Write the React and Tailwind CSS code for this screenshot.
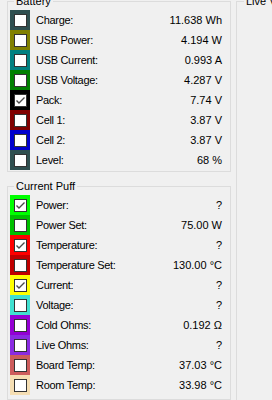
const battery = [
  { label: 'Charge:', value: '11.638 Wh', color: 'bg-[#2f4f4f]' },
  { label: 'USB Power:', value: '4.194 W', color: 'bg-[#808000]' },
  { label: 'USB Current:', value: '0.993 A', color: 'bg-[#008080]' },
  { label: 'USB Voltage:', value: '4.287 V', color: 'bg-[#008000]' },
  { label: 'Pack:', value: '7.74 V', color: 'bg-[#000000]', checked: true },
  { label: 'Cell 1:', value: '3.87 V', color: 'bg-[#800000]' },
  { label: 'Cell 2:', value: '3.87 V', color: 'bg-[#0000cd]' },
  { label: 'Level:', value: '68 %', color: 'bg-[#2f4f4f]' },
]

const puff = [
  { label: 'Power:', value: '?', color: 'bg-[#00ff00]', checked: true },
  { label: 'Power Set:', value: '75.00 W', color: 'bg-[#00c000]' },
  { label: 'Temperature:', value: '?', color: 'bg-[#ff0000]', checked: true },
  { label: 'Temperature Set:', value: '130.00 °C', color: 'bg-[#c00000]' },
  { label: 'Current:', value: '?', color: 'bg-[#ffff00]', checked: true },
  { label: 'Voltage:', value: '?', color: 'bg-[#40e0d0]' },
  { label: 'Cold Ohms:', value: '0.192 Ω', color: 'bg-[#9400d3]' },
  { label: 'Live Ohms:', value: '?', color: 'bg-[#8a2be2]' },
  { label: 'Board Temp:', value: '37.03 °C', color: 'bg-[#cd5c5c]' },
  { label: 'Room Temp:', value: '33.98 °C', color: 'bg-[#f5deb3]' },
]

function Row({ label, value, color, checked }) {
  return (
    <div className="flex items-center h-[20px]">
      <div className={`w-[20px] h-[20px] flex items-center justify-center ${color}`}>
        <div className="w-[13px] h-[13px] bg-white border border-[#333333] flex items-center justify-center">
          {checked && (
            <svg width="11" height="11" viewBox="0 0 11 11">
              <polyline points="1.5,5.5 4,8 9.5,2.5" fill="none" stroke="#4a4a4a" strokeWidth="1.4" />
            </svg>
          )}
        </div>
      </div>
      <span className="ml-[6px] tracking-[-0.3px]">{label}</span>
      <span className="ml-auto pr-[8px]">{value}</span>
    </div>
  )
}

function Group({ title, rows, className }) {
  return (
    <fieldset className={`border border-[#dcdcdc] pl-[2px] pt-[2px] pb-[1px] ${className}`}>
      <legend className="ml-[4px] px-[2px] leading-[13px]">{title}</legend>
      {rows.map(r => (
        <Row key={r.label} {...r} />
      ))}
    </fieldset>
  )
}

export default function App() {
  return (
    <div
      className="w-[272px] h-[400px] overflow-hidden bg-[#f0f0f0] text-black text-[11px] flex"
      style={{ fontFamily: '"Liberation Sans", Arial, sans-serif' }}
    >
      <div className="ml-[7px] w-[224px] shrink-0 flex flex-col">
        <Group title="Battery" rows={battery} className="-mt-[5px]" />
        <Group title="Current Puff" rows={puff} className="mt-[8px] h-[260px]" />
      </div>
      <fieldset className="ml-[5px] w-[200px] shrink-0 h-[420px] -mt-[5px] border border-[#dcdcdc] pl-[2px]">
        <legend className="ml-[5px] px-[2px] leading-[13px] whitespace-nowrap">Live Values</legend>
      </fieldset>
    </div>
  )
}
